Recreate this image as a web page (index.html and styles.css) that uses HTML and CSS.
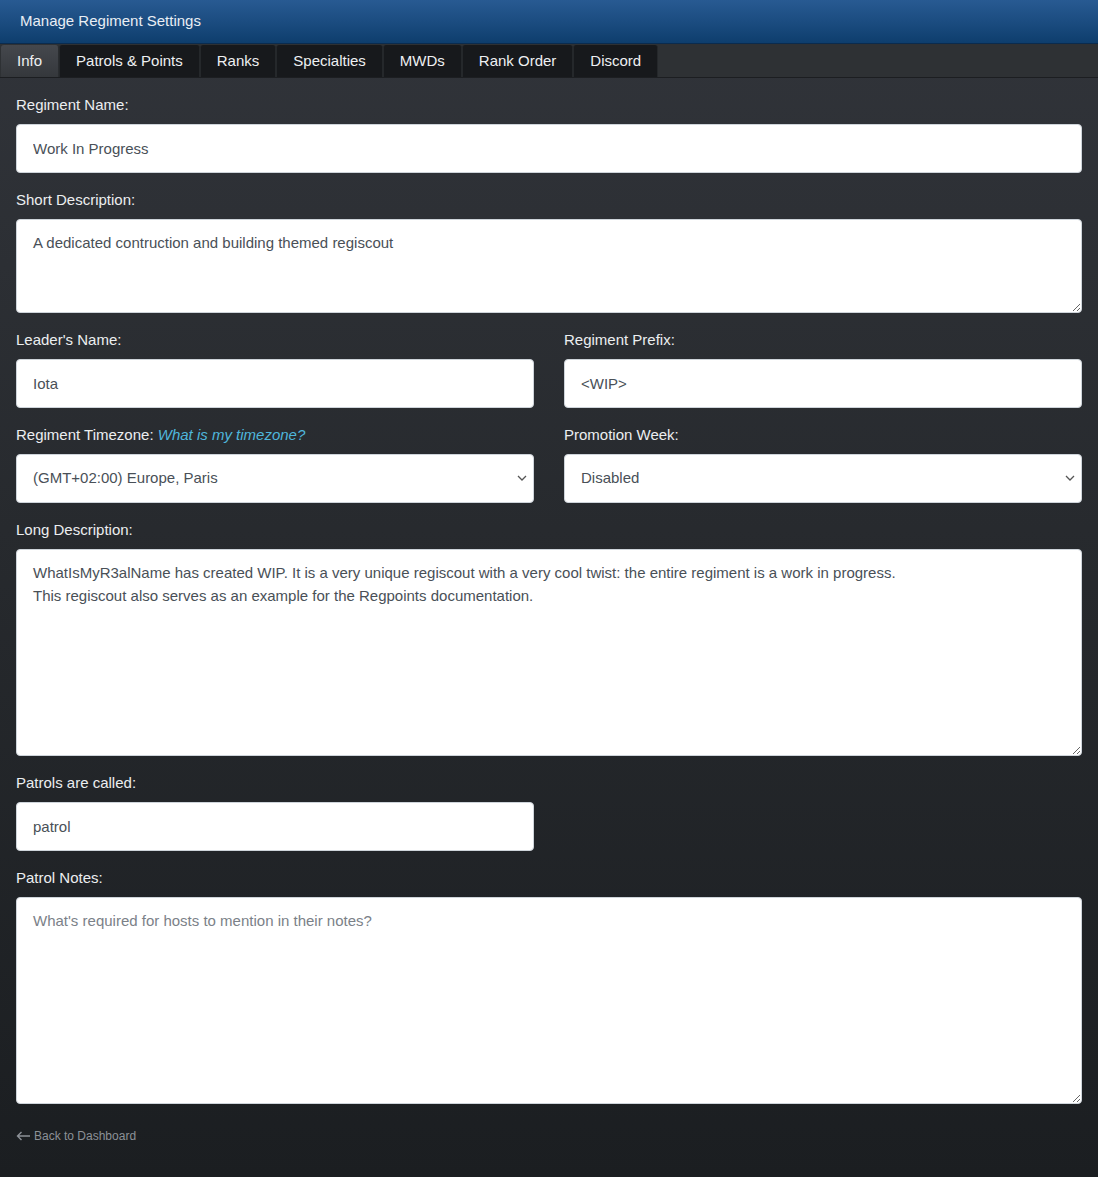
FILE: index.html
```html
<!DOCTYPE html>
<html lang="en">
<head>
<meta charset="utf-8">
<title>Manage Regiment Settings</title>
<link rel="stylesheet" href="styles.css">
</head>
<body>
<div class="page">
  <header class="topbar">Manage Regiment Settings</header>
  <nav class="tabs">
    <a class="tab active">Info</a>
    <a class="tab">Patrols &amp; Points</a>
    <a class="tab">Ranks</a>
    <a class="tab">Specialties</a>
    <a class="tab">MWDs</a>
    <a class="tab">Rank Order</a>
    <a class="tab">Discord</a>
  </nav>
  <main class="content">
    <div class="group">
      <label class="label">Regiment Name:</label>
      <input class="control" type="text" value="Work In Progress">
    </div>
    <div class="group">
      <label class="label">Short Description:</label>
      <textarea class="control area-short">A dedicated contruction and building themed regiscout</textarea>
    </div>
    <div class="row">
      <div class="group">
        <label class="label">Leader's Name:</label>
        <input class="control" type="text" value="Iota">
      </div>
      <div class="group">
        <label class="label">Regiment Prefix:</label>
        <input class="control" type="text" value="&lt;WIP&gt;">
      </div>
    </div>
    <div class="row">
      <div class="group">
        <label class="label">Regiment Timezone: <a class="help">What is my timezone?</a></label>
        <select class="control select"><option>(GMT+02:00) Europe, Paris</option></select>
      </div>
      <div class="group">
        <label class="label">Promotion Week:</label>
        <select class="control select"><option>Disabled</option></select>
      </div>
    </div>
    <div class="group">
      <label class="label">Long Description:</label>
      <textarea class="control area-long">WhatIsMyR3alName has created WIP. It is a very unique regiscout with a very cool twist: the entire regiment is a work in progress.
This regiscout also serves as an example for the Regpoints documentation.</textarea>
    </div>
    <div class="row">
      <div class="group">
        <label class="label">Patrols are called:</label>
        <input class="control" type="text" value="patrol">
      </div>
      <div></div>
    </div>
    <div class="group">
      <label class="label">Patrol Notes:</label>
      <textarea class="control area-long" placeholder="What's required for hosts to mention in their notes?"></textarea>
    </div>
    <a class="back"><svg class="arrow" width="14" height="10" viewBox="0 0 14 10"><path d="M14 5H1.5M5.5 1L1.5 5l4 4" fill="none" stroke="#8c9197" stroke-width="1.4"/></svg>Back to Dashboard</a>
  </main>
</div>
</body>
</html>
```

FILE: styles.css
```css
* { box-sizing: border-box; }
html, body { margin: 0; padding: 0; }
body {
  font-family: "Liberation Sans", Arial, sans-serif;
  font-size: 15px;
  line-height: 1.5;
  color: #eceef0;
  background: #1b1d20;
}
.page {
  min-height: 1177px;
  display: flex;
  flex-direction: column;
  background: linear-gradient(to bottom, #31343a 0%, #272a2e 45%, #1b1e21 100%);
}
.topbar {
  height: 44px;
  display: flex;
  align-items: center;
  padding: 0 20px 2px;
  color: #e9eef4;
  background: linear-gradient(to bottom, #285a92 0%, #1b4c80 50%, #0d3d6c 100%);
}
.tabs {
  display: flex;
  padding: 1px 0 0 1px;
  background: #2e3134;
  border-top: 1px solid #0b2b4d;
  border-bottom: 1px solid #1c1e21;
  margin-top: -1px;
}
.tab {
  height: 32px;
  display: flex;
  align-items: center;
  padding: 0 16px;
  color: #eef0f2;
  background: #17191c;
  border-left: 1px solid #25282b;
  border-right: 1px solid #25282b;
  border-radius: 3px 3px 0 0;
}
.tab.active {
  background: linear-gradient(to bottom, #45484d, #35383c);
  border-left: none;
  border-right-color: #2a2d30;
}
.content {
  padding: 15.5px 16px 24px;
  flex: 1;
}
.group { margin-bottom: 16px; }
.label {
  display: block;
  margin-bottom: 8px;
  color: #eceef0;
}
.help {
  font-style: italic;
  color: #4fb6dc;
}
.row {
  display: grid;
  grid-template-columns: 1fr 1fr;
  column-gap: 30px;
}
.control {
  display: block;
  width: 100%;
  margin: 0;
  padding: 12px 16px;
  font-family: "Liberation Sans", Arial, sans-serif;
  font-size: 15px;
  line-height: 1.5;
  color: #495057;
  background: #fff;
  border: 1px solid #ced4da;
  border-radius: 4px;
  outline: none;
}
input.control { height: 48.5px; }
.select {
  height: 48.5px;
  appearance: none;
  -webkit-appearance: none;
  background-image: url("data:image/svg+xml,%3Csvg xmlns='http://www.w3.org/2000/svg' width='10' height='6' viewBox='0 0 10 6'%3E%3Cpath d='M1 1l4 4 4-4' fill='none' stroke='%23555' stroke-width='1.3'/%3E%3C/svg%3E");
  background-repeat: no-repeat;
  background-position: right 6px center;
  background-size: 10px 6px;
}
textarea.control { resize: vertical; }
.area-short { height: 93.5px; }
.area-long { height: 206.5px; }
.control::placeholder { color: #7b8188; }
.back {
  display: inline-flex;
  align-items: center;
  gap: 4px;
  margin-top: 7px;
  font-size: 12px;
  color: #8c9197;
}
.arrow { display: block; }
```
